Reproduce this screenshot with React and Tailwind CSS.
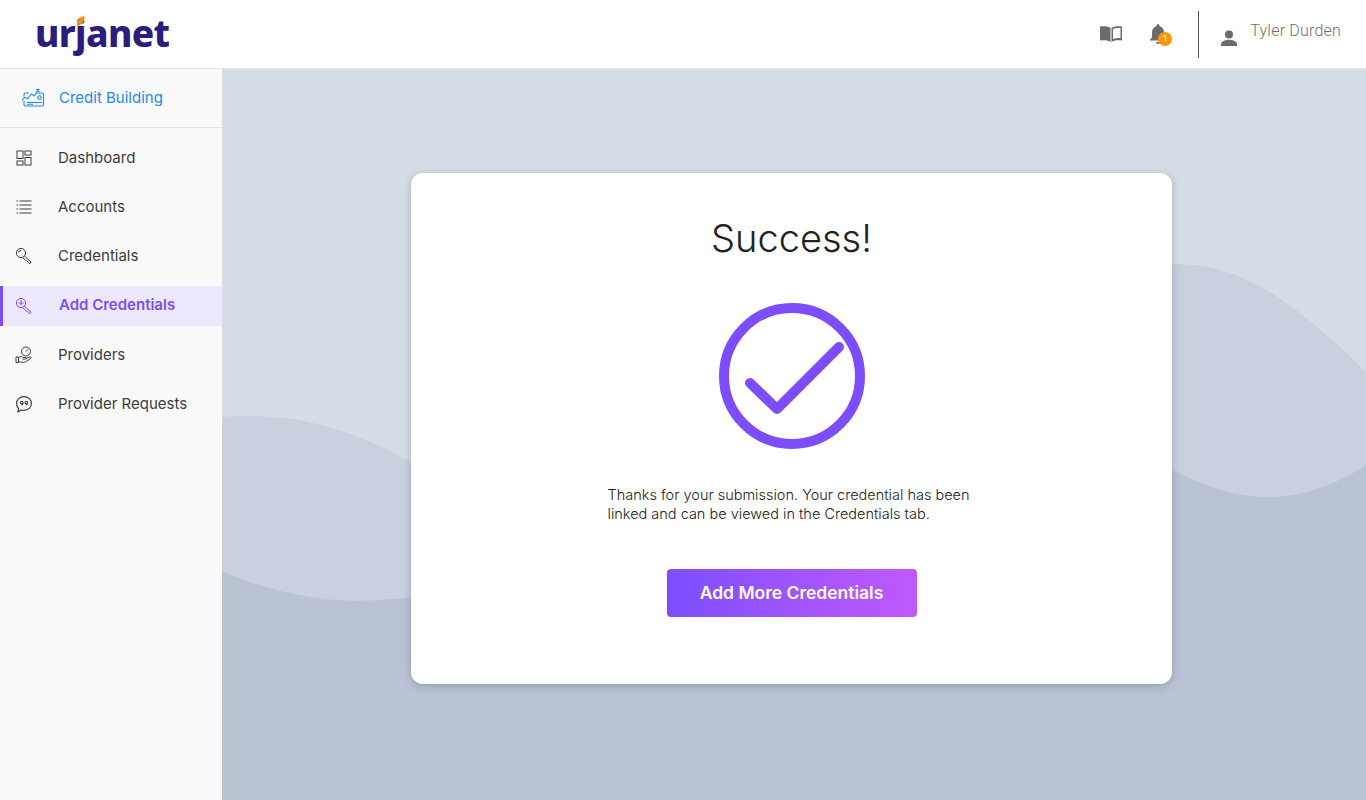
import React from "react";

const navItems = [
  { label: "Dashboard", icon: DashboardIcon },
  { label: "Accounts", icon: AccountsIcon },
  { label: "Credentials", icon: KeyIcon },
  { label: "Add Credentials", icon: KeyPlusIcon, active: true },
  { label: "Providers", icon: ProvidersIcon },
  { label: "Provider Requests", icon: RequestsIcon },
];

function DashboardIcon() {
  return (
    <svg width="16" height="16" viewBox="0 0 16 16" fill="none" stroke="currentColor" strokeWidth="1">
      <rect x="1" y="1" width="6" height="7.5" />
      <rect x="1" y="11" width="6" height="4" />
      <rect x="9" y="1" width="6" height="4" />
      <rect x="9" y="7.5" width="6" height="7.5" />
    </svg>
  );
}

function AccountsIcon() {
  return (
    <svg width="16" height="16" viewBox="0 0 16 16" stroke="currentColor" strokeWidth="1.1">
      <path d="M0.5 2h1.5M3.5 2h12M0.5 6h1.5M3.5 6h12M0.5 10h1.5M3.5 10h12M0.5 14h1.5M3.5 14h12" />
    </svg>
  );
}

function KeyIcon() {
  return (
    <svg width="18" height="18" viewBox="0 0 18 18" fill="none" stroke="currentColor" strokeWidth="1">
      <circle cx="6" cy="6" r="4.6" />
      <path d="M3.6 5.6a2.6 2.6 0 0 1 2.4-2.2" />
      <path d="M9.4 9.2l6.8 5.8-1.4 1.8-1.6-1.2-.2-1-1.1-.2-3.9-3.4" />
    </svg>
  );
}

function KeyPlusIcon() {
  return (
    <svg width="18" height="18" viewBox="0 0 18 18" fill="none" stroke="currentColor" strokeWidth="1">
      <circle cx="6" cy="6" r="4.6" />
      <path d="M6 3.4v5.2M3.4 6h5.2" />
      <path d="M9.4 9.2l6.8 5.8-1.4 1.8-1.6-1.2-.2-1-1.1-.2-3.9-3.4" />
    </svg>
  );
}

function ProvidersIcon() {
  return (
    <svg width="18" height="18" viewBox="0 0 18 18" fill="none" stroke="currentColor" strokeWidth="1">
      <circle cx="11" cy="5.5" r="4.5" />
      <path d="M11 5.5l1.8-2" />
      <path d="M1 11h2.5v5.5H1zM3.5 11.5c2-1.2 3.4-.8 5 0h2.2c1 0 1 1.6 0 1.6H7.5M10.8 12.6l4.2-1.6c1.2-.3 1.7 1 .7 1.6l-5.2 3.2c-2.4.9-4.6.3-7 0" />
    </svg>
  );
}

function RequestsIcon() {
  return (
    <svg width="18" height="18" viewBox="0 0 18 18" fill="none" stroke="currentColor">
      <path strokeWidth="1.2" d="M9 1.6c4.2 0 7.4 3 7.4 6.9s-3.2 6.9-7.4 6.9c-.9 0-1.8-.1-2.6-.4L3 16.8l.6-3.1C2.3 12.4 1.6 10.600 1.600 8.500 1.600 4.600 4.800 1.600 9 1.600z" />
      <circle cx="6.700" cy="7.600" r="1.300" strokeWidth="1.100" />
      <circle cx="11.300" cy="7.600" r="1.300" strokeWidth="1.100" />
      <path strokeWidth="1.100" d="M8 7.800c0 1.300-.5 2-1.400 2.500M12.600 7.800c0 1.300-.5 2-1.400 2.500" />
    </svg>
  );
}

function CreditIcon() {
  return (
    <svg width="24" height="20" viewBox="0 0 24 20" fill="none" stroke="#1e88f5" strokeWidth="1.1">
      <path d="M3 8.500V6.500a1.500 1.500 0 0 1 1.500-1.500h3.500M15 5h6a1.500 1.500 0 0 1 1.500 1.500v10a1.500 1.500 0 0 1-1.500 1.500H4.500A1.500 1.500 0 0 1 3 16.500V13" />
      <path d="M1 12.500l2.500-3 3 1 4-4.500 3 2 3.500-6.500" />
      <path d="M15 1.500h2.800v2.800" />
      <circle cx="18.500" cy="9.500" r="1.800" />
      <path d="M6 14.500h15M6 16.200h6" />
    </svg>
  );
}

function Logo() {
  return (
    <div className="relative ml-[35px] mt-[9px] text-[37px] leading-[48px] font-extrabold tracking-[-0.6px] text-[#2d1c80] font-['Noto_Sans',sans-serif]">
      urjanet
      <svg className="absolute left-[41px] top-[7px]" width="9" height="10" viewBox="0 0 9 10">
        <path d="M1 10C0 5 3 1 8.500 0 9 5 6 9 1 10z" fill="#f5930b" />
      </svg>
    </div>
  );
}

function Header() {
  return (
    <header className="flex h-[69px] justify-between border-b border-[#dfe3ea] bg-white">
      <Logo />
      <div className="flex items-center">
        <svg className="mr-[25px]" width="24" height="18" viewBox="0 0 24 18">
          <path fill="#6b6b6b" d="M11.500 3C9.500 1.500 6 1 1 1.500v14C6 15 9.500 15.500 11.500 17z" />
          <path fill="#6b6b6b" d="M12.500 3C14.500 1.500 18 1 23 1.500v14c-5-.5-8.500 0-10.500 1.500zM14 4v10c2.500-1 5-1.100 7.500-1V3C19 2.900 16 3 14 4z" />
        </svg>
        <div className="relative mr-[26px] h-[24px] w-[24px]">
          <svg width="20" height="24" viewBox="0 0 20 24" className="absolute left-0 top-0">
            <path fill="#6b6b6b" d="M10 2a1.500 1.500 0 0 1 1.500 1.500v.7c2.900.7 4.500 3.200 4.500 6.300v5l2 2v1H2v-1l2-2v-5c0-3.100 1.600-5.600 4.500-6.300v-.7A1.500 1.500 0 0 1 10 2zM8 20h4a2 2 0 0 1-4 0z" />
          </svg>
          <span className="absolute left-[10px] top-[10px] flex h-[14px] w-[14px] items-center justify-center rounded-full bg-[#ff9800] text-[9px] leading-none text-white font-['Roboto',sans-serif]">
            1
          </span>
        </div>
        <div className="h-[47px] w-px bg-[#555]" />
        <svg className="ml-[20px] mr-[11px] mt-[8px]" width="20" height="20" viewBox="0 0 20 20">
          <circle cx="10" cy="6.500" r="4" fill="#6b6b6b" />
          <path fill="#6b6b6b" d="M2 18v-2c0-2.800 5.300-4.200 8-4.200s8 1.400 8 4.200v2z" />
        </svg>
        <span className="mb-[7px] mr-[25px] text-[16px] font-light tracking-[0.2px] text-[#6f6f6f] font-['Roboto',sans-serif]">
          Tyler Durden
        </span>
      </div>
    </header>
  );
}

function Sidebar() {
  return (
    <aside className="w-[222px] shrink-0 bg-[#fafafa] font-['Inter',sans-serif]">
      <div className="flex h-[59px] items-center gap-[14px] border-b border-[#dfe3ea] pl-[21px] text-[15px] text-[#1e88f5]">
        <CreditIcon />
        <span>Credit Building</span>
      </div>
      <nav className="flex flex-col gap-[9.200px] pt-[10px]">
        {navItems.map(({ label, icon: Icon, active }) => (
          <div
            key={label}
            className={
              active
                ? "flex h-[40px] items-center border-l-[3px] border-[#7c4dff] bg-[#ede9fc] text-[15px] font-semibold text-[#7c4dff]"
                : "flex h-[40px] items-center border-l-[3px] border-transparent text-[15px] text-[#3c3c3c]"
            }
          >
            <span className="flex w-[56px] justify-center pr-[15px]">
              <Icon />
            </span>
            <span className={active ? "-ml-[0px]" : "-ml-px"}>{label}</span>
          </div>
        ))}
      </nav>
    </aside>
  );
}

function Waves() {
  return (
    <svg
      className="absolute inset-0 h-full w-full"
      viewBox="0 0 1144 731"
      preserveAspectRatio="none"
    >
      <path
        fill="#c9d0de"
        d="M0 348C70 342 130 360 189 393L950 195C1010 194 1060 220 1144 303V731H0z"
      />
      <path
        fill="#b9c3d3"
        d="M0 502C60 528 120 538 189 528L950 401C1000 425 1060 450 1144 396V731H0z"
      />
    </svg>
  );
}

function SuccessCard() {
  return (
    <div className="relative flex h-[511px] w-[761px] flex-col items-center rounded-xl bg-white pt-[38px] shadow-[0_2px_8px_rgba(60,70,100,0.3)] font-['Inter',sans-serif]">
      <h1 className="text-[38px] font-light leading-[54px] text-[#222]">Success!</h1>
      <svg className="mt-[38px]" width="146" height="146" viewBox="0 0 146 146" fill="none" stroke="#7c4dff" strokeLinecap="round" strokeLinejoin="round">
        <circle cx="73" cy="73" r="68" strokeWidth="10" />
        <path d="M31 80l27 26 62-62" strokeWidth="10" />
      </svg>
      <p className="mt-[36px] w-[368px] text-[14.500px] font-light leading-[19px] text-[#222]">
        Thanks for your submission. Your credential has been linked and can be viewed in the Credentials tab.
      </p>
      <button className="mt-[46px] h-[48px] w-[250px] rounded-[4px] bg-gradient-to-r from-[#7c4dff] to-[#c158ff] text-[17.500px] font-semibold text-white">
        Add More Credentials
      </button>
    </div>
  );
}

export default function App() {
  return (
    <div className="flex h-[800px] flex-col overflow-hidden">
      <Header />
      <div className="flex flex-1">
        <Sidebar />
        <main className="relative flex-1 bg-[#d5dde7] pl-[189px] pt-[104px]">
          <Waves />
          <SuccessCard />
        </main>
      </div>
    </div>
  );
}
